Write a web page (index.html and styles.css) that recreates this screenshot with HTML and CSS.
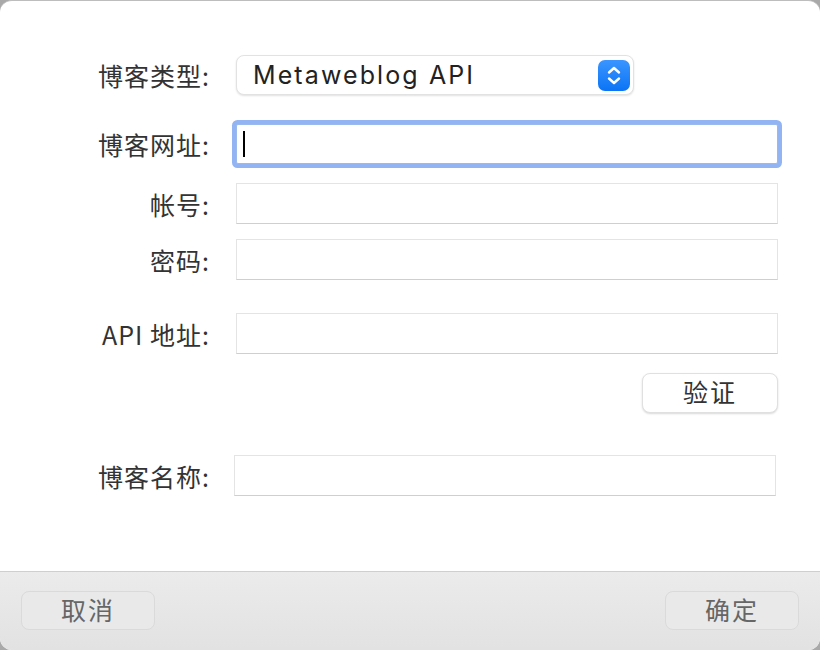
FILE: index.html
```html
<!DOCTYPE html>
<html lang="zh-CN">
<head>
<meta charset="utf-8">
<title>博客设置</title>
<link rel="stylesheet" href="styles.css">
</head>
<body>
<div class="window">
  <main class="form">
    <div class="row row-type">
      <label class="label">博客类型:</label>
      <div class="select">
        <span class="select-text">Metaweblog API</span>
        <span class="stepper">
          <svg width="32" height="31" viewBox="0 0 32 31">
            <path d="M11 12.5 L16 8 L21 12.5" fill="none" stroke="#fff" stroke-width="2.4" stroke-linecap="round" stroke-linejoin="round"/>
            <path d="M11 18.5 L16 23 L21 18.5" fill="none" stroke="#fff" stroke-width="2.4" stroke-linecap="round" stroke-linejoin="round"/>
          </svg>
        </span>
      </div>
    </div>
    <div class="row row-url">
      <label class="label">博客网址:</label>
      <div class="field focused"><span class="caret"></span></div>
    </div>
    <div class="row row-account">
      <label class="label">帐号:</label>
      <div class="field"></div>
    </div>
    <div class="row row-password">
      <label class="label">密码:</label>
      <div class="field"></div>
    </div>
    <div class="row row-api">
      <label class="label">API 地址:</label>
      <div class="field"></div>
    </div>
    <div class="row row-verify">
      <button class="btn verify">验证</button>
    </div>
    <div class="row row-name">
      <label class="label">博客名称:</label>
      <div class="field field-name"></div>
    </div>
  </main>
  <footer class="footer">
    <button class="btn footer-btn">取消</button>
    <button class="btn footer-btn">确定</button>
  </footer>
</div>
</body>
</html>
```

FILE: styles.css
```css
* { box-sizing: border-box; }
html, body {
  margin: 0;
  padding: 0;
  width: 820px;
  height: 650px;
  overflow: hidden;
  background: #a9a9a9;
  font-family: "Noto Sans CJK SC", "Noto Sans", sans-serif;
}
.window {
  width: 820px;
  height: 650px;
  display: flex;
  flex-direction: column;
  background: #fff;
  border-radius: 12px;
  overflow: hidden;
  border-top: 1px solid #bdbdbd;
}
.form {
  flex: 0 0 570px;
  display: flex;
  flex-direction: column;
  padding-top: 54px;
}
.row {
  display: flex;
  align-items: center;
  gap: 26px;
}
.label {
  width: 210px;
  text-align: right;
  font-size: 25px;
  line-height: 30px;
  color: #333;
  letter-spacing: 1px;
}
.select {
  width: 398px;
  height: 40px;
  background: #fff;
  border-radius: 8px;
  border: 1px solid #e2e2e2;
  box-shadow: 0 1px 2px rgba(0,0,0,0.12);
  display: flex;
  align-items: center;
  justify-content: space-between;
  padding: 0 3px 0 16px;
}
.select-text {
  font-family: "Inter", "Noto Sans", sans-serif;
  font-size: 25px;
  color: #222;
  letter-spacing: 2.1px;
}
.stepper {
  width: 32px;
  height: 31px;
  border-radius: 7px;
  background: linear-gradient(#3a95ff, #0b74f5);
  display: flex;
}
.field {
  width: 542px;
  height: 41px;
  background: #fff;
  border: 1px solid #e4e4e4;
  border-bottom-color: #cfcfcf;
  position: relative;
}
.field.focused {
  height: 40px;
  box-shadow: 0 0 0 4px #93b4f2;
  border-radius: 2px;
  border-color: #9cb9ee;
}
.caret {
  position: absolute;
  left: 6px;
  top: 6px;
  width: 2px;
  height: 26px;
  background: #000;
}
.row-url { margin-top: 29px; }
.row-account { margin-top: 19px; }
.row-password { margin-top: 15px; }
.row-api { margin-top: 33px; }
.row-verify { margin-top: 19px; justify-content: flex-end; padding-right: 42px; }
.row-name { margin-top: 42px; gap: 24px; }
.btn {
  font-family: "Noto Sans CJK SC", sans-serif;
  font-size: 25px;
  line-height: 30px;
  border-radius: 8px;
  cursor: default;
  padding: 0 0 4px 0;
}
.verify {
  width: 136px;
  height: 40px;
  background: #fff;
  border: 1px solid #e0e0e0;
  box-shadow: 0 1px 2px rgba(0,0,0,0.15);
  color: #333;
  letter-spacing: 2px;
}
.footer {
  flex: 1;
  border-top: 1px solid #cfcfcf;
  background: linear-gradient(#ebebeb, #e2e2e2);
  display: flex;
  justify-content: space-between;
  align-items: flex-start;
  padding: 19px 21px 0 21px;
}
.footer-btn {
  width: 134px;
  height: 39px;
  background: #e9e9e9;
  border: 1px solid #dadada;
  color: #666;
  letter-spacing: 2px;
}
```
